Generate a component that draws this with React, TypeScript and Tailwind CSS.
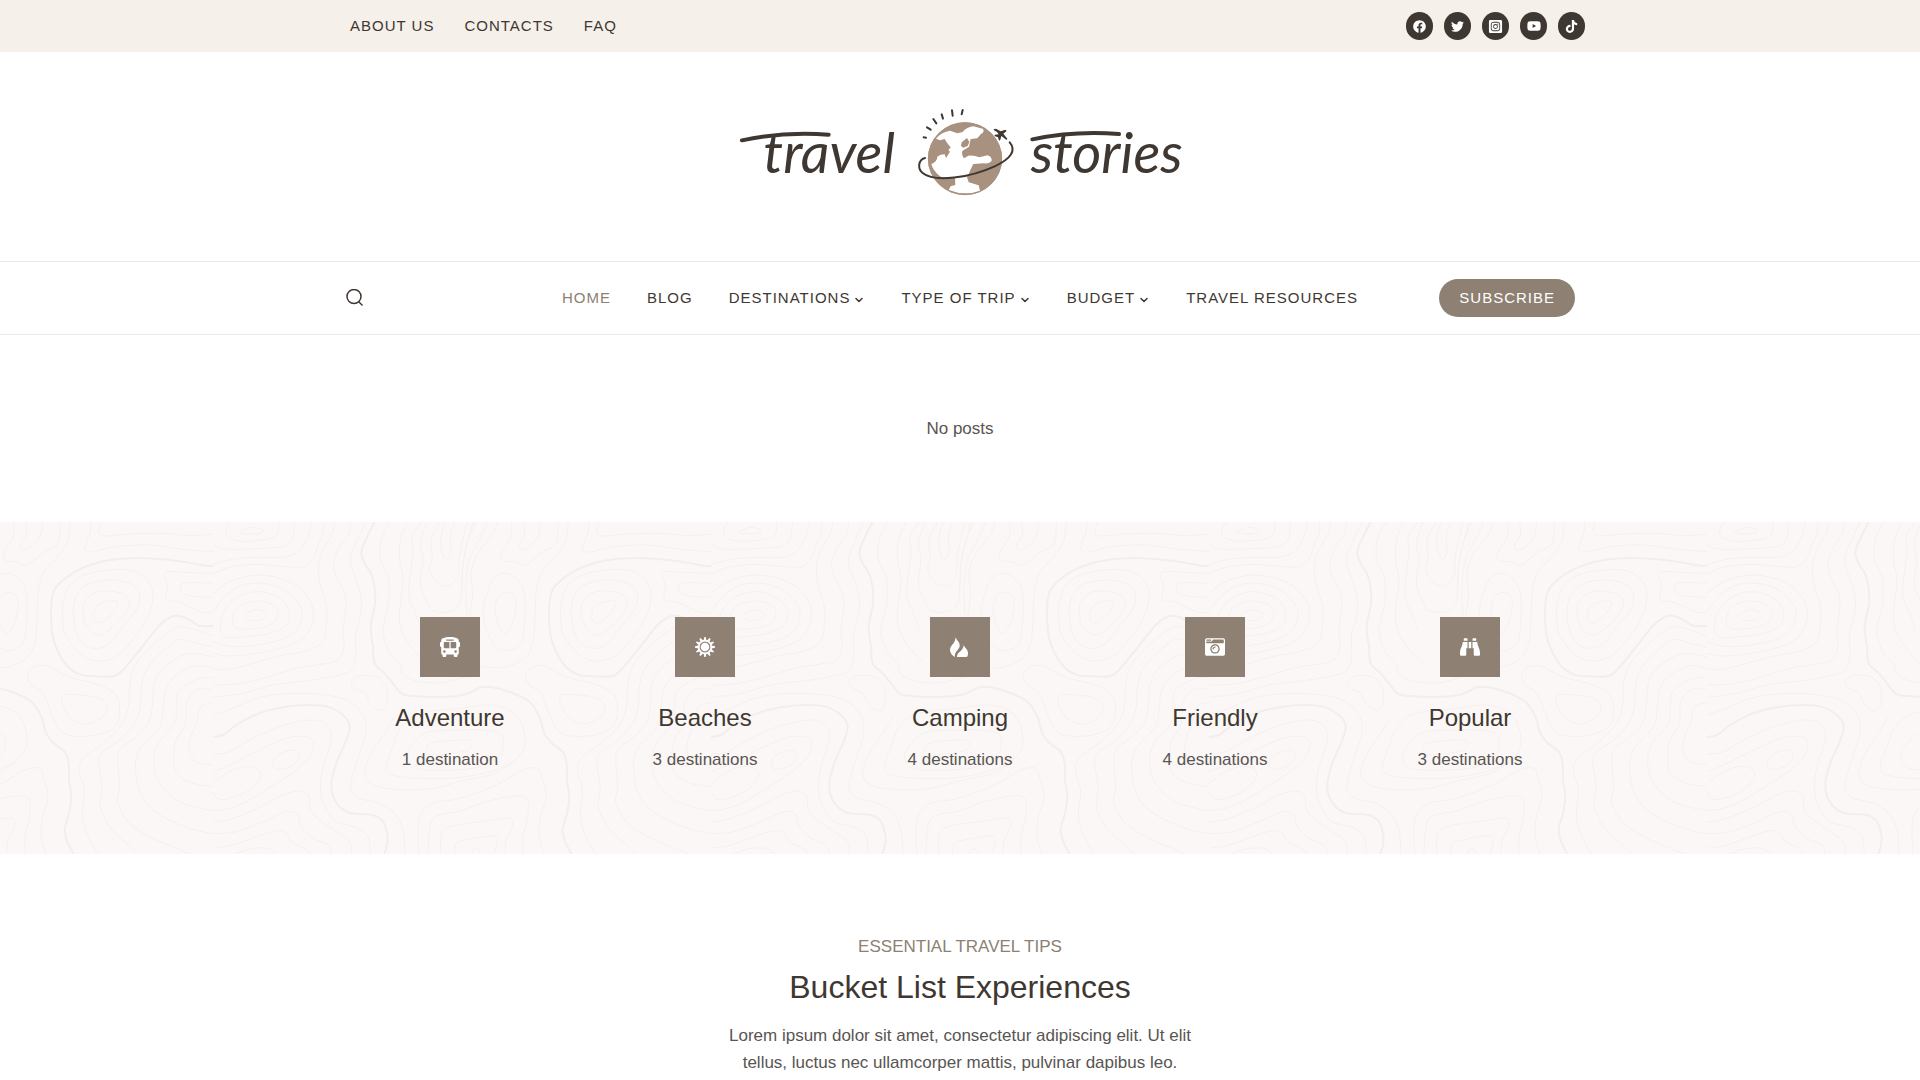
import React from 'react';
import { ChevronDown } from 'lucide-react';
import {
    FaBinoculars,
    FaBusAlt,
    FaCameraRetro,
    FaFacebook,
    FaInstagramSquare,
    FaTiktok,
    FaTwitter,
    FaYoutube,
} from 'react-icons/fa';

interface NavItem {
    label: string;
    active?: boolean;
    menu?: boolean;
}

interface Category {
    title: string;
    count: string;
    icon: React.ReactNode;
}

const SunIcon = () => (
    <svg viewBox="0 0 60 60" width="20" height="20" aria-hidden="true">
        <g fill="currentColor">
            {[0, 30, 60, 90, 120, 150, 180, 210, 240, 270, 300, 330].map(a => (
                <path key={a} d="M25 13 L28 0 H32 L35 13 Z" transform={`rotate(${a} 30 30)`} />
            ))}
            <circle cx="30" cy="30" r="13" />
        </g>
        <circle cx="30" cy="30" r="19" fill="none" stroke="currentColor" strokeWidth="5" />
    </svg>
);

const FlamesIcon = () => (
    <svg viewBox="0 0 20 20" width="20" height="20" fill="currentColor" aria-hidden="true">
        <path d="M5.500 0 C6 3 10.500 5 9.600 9.500 C9 13 4 14.500 5 20 C1.500 18 0 15.500 0 13 C0 8 6 6 5.500 0 Z" />
        <path d="M13.600 7.500 C14 10.500 18 12 18 16 C18 18 17.500 20 16.500 20 H7 C7 16 10 15 12 12.500 C13.500 10.500 13.800 9 13.600 7.500 Z" />
    </svg>
);

const topLinks = ['ABOUT US', 'CONTACTS', 'FAQ'];

const socials = [
    { name: 'Facebook', icon: <FaFacebook size={13} /> },
    { name: 'Twitter', icon: <FaTwitter size={13} /> },
    { name: 'Instagram', icon: <FaInstagramSquare size={15} /> },
    { name: 'YouTube', icon: <FaYoutube size={14} /> },
    { name: 'TikTok', icon: <FaTiktok size={13} /> },
];

const navItems: NavItem[] = [
    { label: 'HOME', active: true },
    { label: 'BLOG' },
    { label: 'DESTINATIONS', menu: true },
    { label: 'TYPE OF TRIP', menu: true },
    { label: 'BUDGET', menu: true },
    { label: 'TRAVEL RESOURCES' },
];

const categories: Category[] = [
    { title: 'Adventure', count: '1 destination', icon: <FaBusAlt size={20} /> },
    { title: 'Beaches', count: '3 destinations', icon: <SunIcon /> },
    { title: 'Camping', count: '4 destinations', icon: <FlamesIcon /> },
    { title: 'Friendly', count: '4 destinations', icon: <FaCameraRetro size={20} /> },
    { title: 'Popular', count: '3 destinations', icon: <FaBinoculars size={20} /> },
];

// Turns "x,y x,y ..." into a smooth Catmull-Rom curve
const smooth = (points: string, closed = false) => {
    const p = points.split(' ').map(s => s.split(',').map(Number));
    const n = p.length;
    const at = (i: number) => (closed ? p[(i + n) % n] : p[Math.max(0, Math.min(n - 1, i))]);
    let d = `M${p[0][0]} ${p[0][1]}`;
    for (let i = 0; i < (closed ? n : n - 1); i++) {
        const [a, b, c, e] = [at(i - 1), at(i), at(i + 1), at(i + 2)];
        d += `C${b[0] + (c[0] - a[0]) / 6} ${b[1] + (c[1] - a[1]) / 6} ${c[0] - (e[0] - b[0]) / 6} ${c[1] - (e[1] - b[1]) / 6} ${c[0]} ${c[1]}`;
    }
    return closed ? d + 'Z' : d;
};

// Contour map tile, west half
const westLines = [
    '50,6 37,35 50,55 90,64 160,58 192,45 197,6',
    '0,70 20,84 60,88 150,85 215,78 238,55 245,6',
    '0,133 60,118 130,112 210,112 255,95 285,50 295,6',
    '0,162 50,142 130,133 220,140 270,140 300,115 315,75 330,40 332,6',
    '365,6 358,40 325,100 316,150 322,195 340,260 340,320 325,370 270,395 200,408 120,430 50,447 0,447',
    '412,6 408,40 380,80 362,130 370,170 395,220 398,270 390,330 393,380 375,420 330,432 250,445 150,475 70,492 0,495',
    '460,6 438,50 412,120 430,180 445,240 440,300 428,340 428,410 415,450 380,465 300,480 180,495 90,520 0,532',
    '0,275 40,225 90,195 150,190 215,210 262,260 262,310 225,350 150,372 60,380 0,365',
    '0,220 50,185 120,166 190,172 255,200 295,250 300,300 275,350 220,380 130,400 50,408 0,400',
    '0,585 60,565 130,535 210,522 310,522 400,540 450,585 458,640 440,700 418,770 415,810 440,835 500,850 545,880 570,930 575,1005',
    '0,703 50,695 110,660 200,620 290,600 335,610 356,640 350,680 330,740 322,800 335,860 370,905 430,922 465,950 472,1005',
    '0,755 50,735 130,695 220,655 280,650 303,670 290,710 250,750 190,790 110,840 50,865 0,872',
    '0,790 50,755 100,739 138,750 138,780 100,815 50,835 15,837 0,815',
    '0,907 60,895 140,862 210,825 260,813 288,830 292,870 320,900 370,935 410,965 415,1005',
    '0,941 70,935 150,905 220,875 255,885 265,920 300,955 345,975 355,1005',
    '0,985 60,975 130,950 190,932 220,940 235,965 275,985 295,1005',
    '60,1005 110,987 165,985 195,1005',
    '530,6 505,60 503,120 525,170 528,240 515,300 510,340 530,400 560,430 572,465 620,485 690,488 760,470',
    '585,6 562,60 560,120 570,180 562,250 560,310 580,360 610,400 640,430',
    '625,6 598,50 600,100 592,160 588,230 610,285 625,330',
    '642,6 622,70 630,120 622,190 640,240 660,272 710,275 740,250 748,180 752,120 780,6',
    '680,6 655,60 658,110 650,150 675,190 710,196 735,165 738,120 744,80 762,6',
    '695,6 683,60 690,105 705,118 714,90 712,50 725,6',
    '545,590 515,640 475,700 455,760 480,795 560,809 660,805 744,783 840,762 905,725',
    '618,1005 615,940 622,885 660,850 744,834 850,795 930,750 975,745 985,770 999,830 980,900 980,960 995,1005',
    '645,1005 648,940 660,895 700,880 744,873 820,845 915,827 945,845 942,900 930,950 930,1005',
    '682,1005 685,945 700,925 744,913 820,903 890,895 898,920 880,960 875,1005',
    '725,1005 730,970 760,960 845,948 850,975 840,1005',
    '775,1005 782,988 795,988 805,1005',
];

const westRings = [
    '85,35 120,22 153,32 135,41 95,41',
    '95,287 130,269 160,280 150,297 115,302',
    '58,300 75,260 130,243 180,255 195,285 170,315 120,326 70,325',
    '22,330 35,270 80,228 140,215 200,235 230,275 220,315 170,340 100,350 40,352',
    '415,485 440,467 490,470 520,500 522,550 505,572 475,555 455,520 425,505',
    '180,735 195,705 240,690 258,705 240,735 200,748',
    '520,740 540,680 565,620 620,580 744,565 834,555 904,580 934,640 925,700 860,745 744,772 620,775 540,765',
    '582,700 610,660 650,635 744,630 800,630 862,640 870,680 850,715 780,745 640,750 590,735',
    '640,690 660,668 760,660 776,675 750,695 650,705',
];

// Contour map tile, east half (shifted by 744 units)
const eastLines = [
    '45,6 18,70 5,140 0,230',
    '80,6 55,60 25,120 15,200 18,290',
    '110,6 90,50 50,100 30,160 35,220 26,290',
    '152,6 150,50 122,100 128,122 160,125 190,136 220,115 245,95 285,70 292,6',
    '188,6 190,45 172,75 185,90 215,72 235,40 238,6',
    '322,6 312,70 275,120 240,160 225,220 222,300 215,370 190,415 130,442 60,440',
    '384,6 380,40 365,85 385,96 460,80 560,75 660,88 754,95',
    '416,6 408,35 425,48 500,42 600,40 680,47 754,42',
    '754,160 690,158 615,155 605,170 614,200 610,240 645,245 690,265 720,277 754,278',
    '754,190 690,188 655,192 655,215 685,228 754,232',
    '754,350 700,330 650,320 612,340 565,380 520,430 500,490 498,550 478,610 420,670 360,715 350,760 365,810 358,890 375,950 405,1005',
    '754,382 700,370 650,358 610,385 555,440 535,500 532,560 515,610 470,660 415,700 408,740 418,800 412,860 440,920 490,970 530,1005',
    '754,412 690,400 640,415 590,455 572,500 568,560 555,610 520,650 470,690 465,740 470,800 465,850 500,910 560,950 640,985 690,1005',
    '754,446 700,437 640,465 608,510 600,570 590,620 535,680 518,730 525,800 550,850 600,890 680,925 754,942',
    '754,475 710,475 650,510 640,560 635,610 585,670 572,730 590,790 640,840 700,862 754,872',
    '754,508 700,510 670,550 668,610 640,660 632,710 640,760 690,790 754,800',
    '754,548 712,560 700,610 680,660 680,700 705,728 754,735',
];

const eastRings = [
    '67,270 85,200 110,165 145,162 180,190 192,240 190,320 180,370 140,392 100,375 75,325',
    '102,270 112,230 140,217 162,232 165,270 150,320 130,340 115,320',
    '300,310 300,250 325,190 380,160 470,148 530,160 565,200 568,250 545,310 500,370 460,410 400,423 350,400 310,350',
    '332,300 335,240 370,195 440,180 505,192 530,225 520,270 480,320 440,370 395,385 350,360',
    '362,290 365,245 405,215 465,217 498,240 490,275 450,320 410,345 375,325',
    '392,290 400,260 430,245 464,245 455,270 425,302 400,308',
    '193,465 215,440 250,437 285,455 330,475 400,492 455,520 470,570 455,620 400,645 330,648 290,630 265,580 240,520 205,495',
    '296,535 315,523 400,532 430,555 420,590 370,612 325,595 305,565',
];

const ridges = [
    '485,6 465,45 445,95 455,130 478,170 487,240 473,320 480,380 485,430 515,460 540,490 565,520 600,528 680,531 744,526 774,516 804,502 839,502 894,517 949,545 979,590 994,640 1019,672 1049,695 1061,730 1062,780 1069,830 1062,880 1049,930 1059,970 1077,1005',
    '0,651 30,645 70,615 130,583 210,562 290,555 350,562 395,590 410,620 400,660 370,730 355,790 365,840 400,875 440,882 480,885 510,905 523,945 522,975 513,1005',
    '1498,137 1474,137 1384,122 1274,114 1174,122 1094,148 1034,190 1012,230 1009,310 1019,370 1054,435 1094,463 1144,469 1194,469 1224,450 1274,390 1334,315 1369,290 1394,288 1424,300 1454,318 1498,317',
];

const Topography = () => (
    <svg className="absolute inset-0 h-full w-full" aria-hidden="true">
        <defs>
            <pattern id="topography" x="-249" y="0" width="498" height="333" patternUnits="userSpaceOnUse" viewBox="0 6 1494 999">
                <g fill="none" stroke="#f4f0ee" strokeWidth="3">
                    {westLines.map(l => <path key={l} d={smooth(l)} />)}
                    {westRings.map(l => <path key={l} d={smooth(l, true)} />)}
                    <g transform="translate(744 0)">
                        {eastLines.map(l => <path key={l} d={smooth(l)} />)}
                        {eastRings.map(l => <path key={l} d={smooth(l, true)} />)}
                    </g>
                    <g stroke="#f2eeec" strokeWidth="6">
                        {ridges.map(l => <path key={l} d={smooth(l)} />)}
                    </g>
                </g>
            </pattern>
        </defs>
        <svg x="50%" overflow="visible">
            <rect x="-2490" width="4980" height="333" fill="url(#topography)" />
        </svg>
    </svg>
);

const Logo = () => (
    <svg viewBox="0 0 1440 360" className="w-[480px] max-w-full" role="img" aria-label="Travel stories">
        <g fill="#3f3731" className="font-['Lato',sans-serif] italic" fontSize="168">
            <text x="130" y="250">travel</text>
            <text x="932" y="250">stories</text>
        </g>
        {/* swashes over the two words */}
        <g fill="none" stroke="#3f3731" strokeWidth="12" strokeLinecap="round">
            <path d="M66 151 Q190 124 326 134" />
            <path d="M937 148 Q1065 121 1197 132" />
        </g>
        {/* globe */}
        <g transform="translate(540 0)">
            <ellipse cx="195" cy="206" rx="111" ry="109" fill="#a8927f" />
            <g fill="#fff">
                <path d="M108 146 Q125 125 150 122 L172 130 L188 126 Q198 112 220 109 L248 116 Q256 124 242 133 L232 145 L212 147 L207 170 L187 183 Q184 195 192 205 L205 197 Q225 196 238 202 L262 196 Q276 200 275 212 Q268 222 250 220 L220 222 L212 238 L204 258 Q160 268 122 260 Q98 242 94 222 Q112 214 112 200 L122 194 L134 193 L138 204 L150 185 L145 180 L152 172 L142 160 L134 147 L120 151 Z" />
                <path d="M165 263 L201 261 L206 277 L236 286 L240 302 Q195 319 146 300 L152 289 L166 285 Z" />
            </g>
            <path d="M185 157 L201 144 L208 156 L203 168 L189 173 L183 167 Z" fill="#a8927f" />
            <ellipse cx="195" cy="206" rx="110" ry="108" fill="none" stroke="#a8927f" strokeWidth="3" />
            <path d="M75 204 C54 210 52 236 68 249 C104 279 212 262 284 229 C333 206 350 181 329 157" fill="none" stroke="#3f3731" strokeWidth="6" strokeLinecap="round" />
            <path d="M281 118 L288 116 L302 124 L316 119 L320 123 L310 131 L322 146 L320 150 L304 138 L301 149 L297 152 L294 142 L283 138 L285 134 L296 133 L291 126 L282 121 Z" fill="#3f3731" />
            <g stroke="#3f3731" strokeWidth="6" strokeLinecap="round">
                <path d="M71 142 L78 143" />
                <path d="M81 112 L92 119" />
                <path d="M100 87 L109 100" />
                <path d="M125 73 L129 86" />
                <path d="M156 61 L158 77" />
                <path d="M188 60 L185 73" />
            </g>
        </g>
    </svg>
);

export default function App() {
    return (
        <div className="bg-white font-['Liberation_Sans',Arial,sans-serif] text-[17px] leading-[27px] text-[#595552]">
            {/* Top bar */}
            <div className="bg-[#f5f0ea]">
                <div className="mx-auto flex h-[52px] max-w-[1250px] items-center justify-between">
                    <nav className="flex" aria-label="Secondary">
                        {topLinks.map(label => (
                            <a key={label} href="#" className="px-[15px] text-[15px] leading-[26px] tracking-[1px] text-[#3f3731]">{label}</a>
                        ))}
                    </nav>
                    <div className="flex gap-[11px]">
                        {socials.map(s => (
                            <a key={s.name} href="#" aria-label={s.name} className="flex h-7 w-[27px] items-center justify-center rounded-full bg-[#3f3731] text-white">
                                {s.icon}
                            </a>
                        ))}
                    </div>
                </div>
            </div>

            <header>
                <div className="flex justify-center pt-[38px] pb-[51px]">
                    <a href="#"><Logo /></a>
                </div>
                <div className="border-y border-[#ebebeb]">
                    <div className="mx-auto grid h-[72px] max-w-[1250px] grid-cols-[1fr_auto_1fr] items-center px-[10px]">
                        <button type="button" aria-label="Search" className="flex h-10 w-10 items-center text-[#3f3731]">
                            <svg viewBox="0 0 18 18" width="18" height="18" fill="none" stroke="currentColor" strokeWidth="1.500" aria-hidden="true">
                                <circle cx="9" cy="7.500" r="7" />
                                <path d="M13.500 12.500 L17.500 16.500" />
                            </svg>
                        </button>
                        <nav className="flex" aria-label="Primary">
                            {navItems.map(item => (
                                <a
                                    key={item.label}
                                    href="#"
                                    className={`flex items-center gap-[3px] px-[18px] text-[15px] leading-[26px] tracking-[1px] ${item.active ? 'text-[#8e8072]' : 'text-[#3f3731]'}`}
                                >
                                    {item.label}
                                    {item.menu && <ChevronDown size={12} strokeWidth={3} className="mt-1" />}
                                </a>
                            ))}
                        </nav>
                        <a href="#" className="justify-self-end rounded-full bg-[#8e8072] px-5 py-[6px] text-[15px] leading-[26px] tracking-[1px] text-white">SUBSCRIBE</a>
                    </div>
                </div>
            </header>

            <main>
                <p className="py-20 text-center">No posts</p>

                <section className="relative overflow-hidden bg-[#faf7f6] pt-[95px] pb-[81px]">
                    <Topography />
                    <div className="relative mx-auto grid max-w-[1275px] grid-cols-5">
                        {categories.map(c => (
                            <a key={c.title} href="#" className="flex flex-col items-center">
                                <span className="flex h-[60px] w-[60px] items-center justify-center bg-[#8e8072] text-white">{c.icon}</span>
                                <h3 className="mt-[23px] text-2xl leading-9 text-[#3f3731]">{c.title}</h3>
                                <p className="mt-[10px]">{c.count}</p>
                            </a>
                        ))}
                    </div>
                </section>

                <section className="mx-auto max-w-[500px] pt-[79px] text-center">
                    <p className="text-[#8e8072]">ESSENTIAL TRAVEL TIPS</p>
                    <h2 className="mt-[3px] text-[32px] leading-[48px] text-[#3f3731]">Bucket List Experiences</h2>
                    <p className="mt-[11px]">Lorem ipsum dolor sit amet, consectetur adipiscing elit. Ut elit tellus, luctus nec ullamcorper mattis, pulvinar dapibus leo.</p>
                </section>
            </main>
        </div>
    );
}
